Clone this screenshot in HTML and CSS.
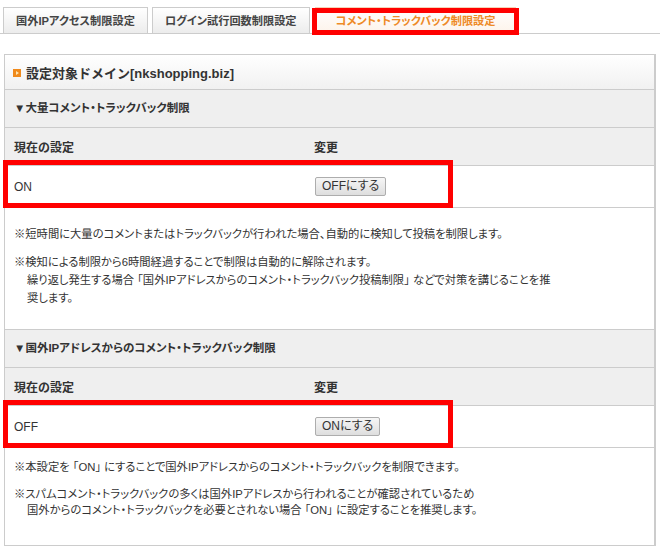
FILE: index.html
```html
<!DOCTYPE html>
<html lang="ja">
<head>
    <meta charset="UTF-8">
    <meta name="viewport" content="width=device-width, initial-scale=1.0">
    <title>コメント・トラックバック制限設定</title>
    <link rel="stylesheet" href="styles.css">
</head>
<body>
    <div class="tabs">
        <div class="tab">国外IPアクセス制限設定</div>
        <div class="tab">ログイン試行回数制限設定</div>
        <div class="tab active">コメント・トラックバック制限設定</div>
    </div>

    <div class="panel">
        <div class="domain">
            <svg class="icon" width="8" height="8" viewBox="0 0 8 8"><rect width="8" height="8" fill="#f08a1c"/><path d="M3 2 L6 4 L3 6 Z" fill="#ffe6b0"/></svg>
            設定対象ドメイン[nkshopping.biz]
        </div>

        <div class="sec-head">▼大量コメント・トラックバック制限</div>
        <div class="row labels">
            <div>現在の設定</div>
            <div>変更</div>
        </div>
        <div class="row value marked">
            <div>ON</div>
            <div><button class="btn">OFFにする</button></div>
        </div>
        <div class="notes">
            <p>※短時間に大量のコメントまたはトラックバックが行われた場合、自動的に検知して投稿を制限します。</p>
            <p>※検知による制限から6時間経過することで制限は自動的に解除されます。<br>繰り返し発生する場合 「国外IPアドレスからのコメント・トラックバック投稿制限」 などで対策を講じることを推<br>奨します。</p>
        </div>

        <div class="sec-head">▼国外IPアドレスからのコメント・トラックバック制限</div>
        <div class="row labels">
            <div>現在の設定</div>
            <div>変更</div>
        </div>
        <div class="row value marked">
            <div>OFF</div>
            <div><button class="btn">ONにする</button></div>
        </div>
        <div class="notes last">
            <p>※本設定を 「ON」 にすることで国外IPアドレスからのコメント・トラックバックを制限できます。</p>
            <p>※スパムコメント・トラックバックの多くは国外IPアドレスから行われることが確認されているため<br>国外からのコメント・トラックバックを必要とされない場合 「ON」 に設定することを推奨します。</p>
        </div>
    </div>
</body>
</html>
```

FILE: styles.css
```css
body {
    font-family: "Liberation Sans", "Noto Sans CJK JP", sans-serif;
    font-size: 12px;
    color: #333;
    background: #fff;
    margin: 0;
    padding: 0;
}
.tabs {
    display: flex;
    gap: 4px;
    padding: 7px 0 0 3px;
    border-bottom: 1px solid #ccc;
    height: 26px;
}
.tab {
    height: 26px;
    line-height: 26px;
    padding: 0 12px;
    border: 1px solid #ccc;
    border-bottom: none;
    background: linear-gradient(#fff, #ececec);
    font-size: 11.2px;
    font-weight: bold;
    color: #444;
    box-sizing: border-box;
    font-feature-settings: "palt";
}
.tab.active {
    position: relative;
    margin-left: 1px;
    padding: 0 20px;
    color: #ee8a26;
    border-color: #f6d2b6;
    background: linear-gradient(#fff, #fdf3ea);
}
.tab.active::after {
    content: "";
    position: absolute;
    top: 0;
    bottom: -2px;
    left: -4px;
    right: -4px;
    border: 5px solid #f00;
}
.panel {
    margin: 20px 4px 0 4px;
    border: 1px solid #ccc;
    border-bottom: none;
    border-right-width: 2px;
}
.domain {
    height: 34px;
    display: flex;
    align-items: center;
    gap: 5px;
    padding-left: 8px;
    font-weight: bold;
    font-size: 13px;
    background: linear-gradient(#fff, #f1f1f1);
    border-bottom: 1px solid #ccc;
}
.domain .icon {
    margin-top: 1px;
}
.sec-head {
    height: 37px;
    line-height: 37px;
    padding-left: 9px;
    font-size: 11.5px;
    font-weight: bold;
    background: #efefef;
    border-bottom: 1px solid #ccc;
    font-feature-settings: "palt";
}
.row {
    display: grid;
    grid-template-columns: 300px 1fr;
    align-items: center;
    padding-left: 9px;
    border-bottom: 1px solid #ccc;
}
.row.labels {
    height: 37px;
    font-weight: bold;
    background: #efefef;
}
.row.value {
    height: 41px;
    background: #fff;
}
.marked {
    position: relative;
}
.marked::after {
    content: "";
    position: absolute;
    top: -6px;
    bottom: -1px;
    left: -2px;
    width: 440px;
    border: 5px solid #f00;
}
.btn {
    font-family: "Liberation Sans", "Noto Sans CJK JP", sans-serif;
    font-size: 12px;
    color: #333;
    height: 19px;
    padding: 0 6px;
    margin-left: 1px;
    border: 1px solid #adadad;
    border-radius: 2px;
    background: linear-gradient(#f6f6f6, #dedede);
    line-height: 17px;
    font-feature-settings: "palt";
}
.notes {
    padding: 17px 10px 22px 9px;
    border-bottom: 1px solid #ccc;
    font-size: 11.3px;
    font-feature-settings: "palt";
}
.notes p {
    margin: 0 0 10px;
    line-height: 18px;
    padding-left: 13px;
    text-indent: -13px;
}
.notes p:last-child {
    margin-bottom: 0;
}
.notes.last {
    padding: 11px 10px 27px 9px;
}
.notes.last p {
    margin-bottom: 11px;
    line-height: 16px;
}
.notes.last p:last-child {
    margin-bottom: 0;
}
```
